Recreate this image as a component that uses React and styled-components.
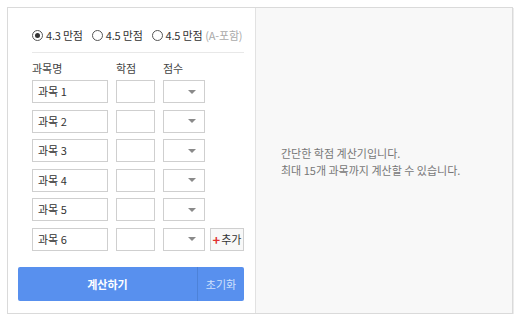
import React from 'react';
import styled, { createGlobalStyle } from 'styled-components';

const GlobalStyle = createGlobalStyle`
  body {
    margin: 0;
    background: #fff;
    font-family: "Noto Sans CJK KR", "Noto Sans", sans-serif;
    color: #333;
  }
`;

const Page = styled.div`
  padding: 7px 0 0 7px;
`;

const Box = styled.div`
  display: flex;
  width: 506px;
  height: 307px;
  box-sizing: border-box;
  border: 1px solid #dadada;
  box-shadow: 1px 1px 0 #ececec;
`;

const LeftPanel = styled.div`
  width: 248px;
  box-sizing: border-box;
  padding: 0 11px 0 10px;
  border-right: 1px solid #e2e2e2;
  background: #fff;
`;

const Form = styled.div`
  padding-left: 14px;
`;

const RadioRow = styled.div`
  display: flex;
  align-items: center;
  gap: 9px;
  padding: 19px 0 9px;
  border-bottom: 1px solid #e8e8e8;
  font-size: 11px;
  line-height: 16px;
  letter-spacing: -0.2px;
  white-space: nowrap;
`;

const RadioLabel = styled.label`
  display: flex;
  align-items: center;
  gap: 3px;
  color: #333;
`;

const Circle = styled.span`
  position: relative;
  flex: none;
  width: 9px;
  height: 9px;
  border: 1px solid #555;
  border-radius: 50%;
  background: #fff;

  &::after {
    content: '';
    display: ${p => (p.$checked ? 'block' : 'none')};
    position: absolute;
    left: 2px;
    top: 2px;
    width: 5px;
    height: 5px;
    border-radius: 50%;
    background: #333;
  }
`;

const Muted = styled.span`
  color: #aaa;
`;

const HeaderRow = styled.div`
  display: flex;
  margin-top: 8px;
  font-size: 11px;
  line-height: 14px;
  color: #444;
`;

const HeaderCell = styled.div`
  width: ${p => p.$w}px;
  margin-right: 8px;
`;

const Rows = styled.div`
  display: flex;
  flex-direction: column;
  gap: 6.6px;
  margin-top: 5px;
`;

const Row = styled.div`
  display: flex;
  align-items: center;
`;

const Field = styled.div`
  width: ${p => p.$w}px;
  height: 23px;
  box-sizing: border-box;
  margin-right: ${p => p.$mr}px;
  border: 1px solid #cfcfcf;
  background: #fff;
  padding-left: 5px;
  font-size: 11px;
  line-height: 21px;
  color: #333;
`;

const Select = styled(Field)`
  display: flex;
  align-items: center;
  justify-content: flex-end;
  padding: 0 8px 0 0;
`;

const Caret = styled.span`
  width: 0;
  height: 0;
  border-left: 4px solid transparent;
  border-right: 4px solid transparent;
  border-top: 4px solid #8a8a8a;
`;

const AddButton = styled.button`
  width: 34px;
  height: 23px;
  padding: 0;
  border: 1px solid #cfcfcf;
  background: #f8f8f8;
  font-family: inherit;
  font-size: 11px;
  color: #333;
  display: flex;
  align-items: center;
  justify-content: center;

  b {
    color: #e03030;
    font-size: 13px;
    margin-right: 1px;
  }
`;

const ButtonBar = styled.div`
  display: flex;
  height: 34px;
  margin-top: 16px;
  border-radius: 2px;
  overflow: hidden;
  background: #5890ee;
`;

const CalcButton = styled.button`
  width: 180px;
  border: none;
  border-right: 1px solid #4d82d8;
  background: none;
  color: #fff;
  font-family: inherit;
  font-size: 11px;
  font-weight: 700;
`;

const ResetButton = styled.button`
  flex: 1;
  border: none;
  background: none;
  color: #cfe0fc;
  font-family: inherit;
  font-size: 11px;
`;

const RightPanel = styled.div`
  flex: 1;
  display: flex;
  flex-direction: column;
  justify-content: center;
  padding: 2px 0 0 25px;
  background: #f8f8f8;
  font-size: 11px;
  line-height: 17px;
  color: #777;
`;

const subjects = ['과목 1', '과목 2', '과목 3', '과목 4', '과목 5', '과목 6'];

const App = () => (
  <Page>
    <GlobalStyle />
    <Box>
      <LeftPanel>
        <Form>
          <RadioRow>
            <RadioLabel>
              <Circle $checked />
              4.3 만점
            </RadioLabel>
            <RadioLabel>
              <Circle />
              4.5 만점
            </RadioLabel>
            <RadioLabel>
              <Circle />
              4.5 만점<Muted>(A-포함)</Muted>
            </RadioLabel>
          </RadioRow>
          <HeaderRow>
            <HeaderCell $w={76}>과목명</HeaderCell>
            <HeaderCell $w={39}>학점</HeaderCell>
            <HeaderCell $w={42}>점수</HeaderCell>
          </HeaderRow>
          <Rows>
            {subjects.map((s, i) => (
              <Row key={s}>
                <Field $w={76} $mr={8}>{s}</Field>
                <Field $w={39} $mr={8} />
                <Select $w={42} $mr={5}>
                  <Caret />
                </Select>
                {i === subjects.length - 1 && (
                  <AddButton>
                    <b>+</b>추가
                  </AddButton>
                )}
              </Row>
            ))}
          </Rows>
        </Form>
        <ButtonBar>
          <CalcButton>계산하기</CalcButton>
          <ResetButton>초기화</ResetButton>
        </ButtonBar>
      </LeftPanel>
      <RightPanel>
        <div>간단한 학점 계산기입니다.</div>
        <div>최대 15개 과목까지 계산할 수 있습니다.</div>
      </RightPanel>
    </Box>
  </Page>
);

export default App;
